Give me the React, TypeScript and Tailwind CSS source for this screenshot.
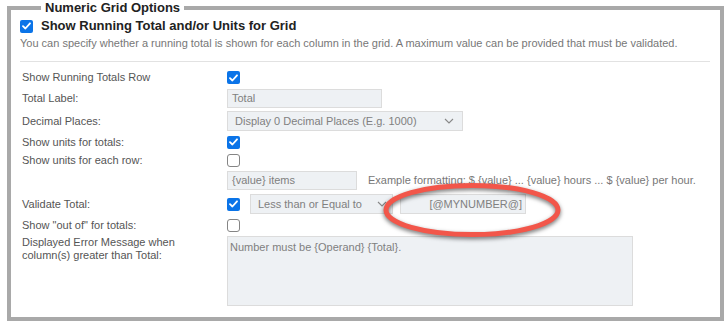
import React from "react";

const Check = ({ on }: { on?: boolean }) =>
  on ? (
    <span className="flex h-[13px] w-[13px] items-center justify-center rounded-[2px] bg-[#0b74e8]">
      <svg width="9" height="8" viewBox="0 0 9 8">
        <path d="M1 4.2 L3.4 6.5 L8 1.3" fill="none" stroke="#fff" strokeWidth="1.8" strokeLinecap="round" strokeLinejoin="round" />
      </svg>
    </span>
  ) : (
    <span className="block h-[13px] w-[13px] rounded-[3px] border border-[#858585] bg-white" />
  );

const Chevron = () => (
  <svg width="10" height="6" viewBox="0 0 10 6">
    <path d="M1 1 L5 5 L9 1" fill="none" stroke="#888" strokeWidth="1.1" />
  </svg>
);

const Row = ({ label, h, children }: { label: string; h: string; children?: React.ReactNode }) => (
  <div className={`flex items-center ${h}`}>
    <div className="w-[207px] shrink-0 pl-[2px] text-[11px] leading-[13px] text-[#555]">{label}</div>
    <div className="flex items-center">{children}</div>
  </div>
);

const field = "flex items-center border border-[#dcdcdc] bg-[#eef1f4] text-[11px] text-[#808080]";

export default function App() {
  return (
    <div className="h-[326px] w-[728px] bg-white font-['Liberation_Sans',Arial,sans-serif]">
      <fieldset className="relative ml-[7px] h-[321px] w-[717px] border-4 border-[#a9a9a9] pl-[9px] pr-[10px]">
        <legend className="ml-[21px] px-[4px] text-[13px] font-bold leading-[16px] text-[#222]">Numeric Grid Options</legend>

        <div className="mt-[2px] flex h-[16px] items-center gap-[8px]">
          <Check on />
          <span className="text-[13px] font-bold text-[#222]">Show Running Total and/or Units for Grid</span>
        </div>
        <div className="mt-[2px] text-[11px] leading-[14px] text-[#777]">
          You can specify whether a running total is shown for each column in the grid. A maximum value can be provided that must be validated.
        </div>
        <div className="mt-[11px] border-t border-[#e2e2e2]" />

        <div className="mt-[6px] flex flex-col">
          <Row label="Show Running Totals Row" h="h-[19px]">
            <Check on />
          </Row>
          <Row label="Total Label:" h="h-[22px]">
            <div className={`${field} h-[19px] w-[155px] px-[4px]`}>Total</div>
          </Row>
          <Row label="Decimal Places:" h="h-[24px]">
            <div className={`${field} h-[20px] w-[236px] justify-between pl-[7px] pr-[8px]`}>
              <span>Display 0 Decimal Places (E.g. 1000)</span>
              <Chevron />
            </div>
          </Row>
          <Row label="Show units for totals:" h="h-[18px]">
            <Check on />
          </Row>
          <Row label="Show units for each row:" h="h-[18px]">
            <Check />
          </Row>
          <Row label="" h="h-[23px]">
            <div className={`${field} h-[19px] w-[130px] px-[4px]`}>{"{value} items"}</div>
            <span className="ml-[11px] text-[11px] text-[#777]">
              {"Example formatting: $ {value} ... {value} hours ... $ {value} per hour."}
            </span>
          </Row>
          <Row label="Validate Total:" h="h-[24px]">
            <Check on />
            <div className={`${field} ml-[10px] h-[20px] w-[143px] justify-between pl-[7px] pr-[5px]`}>
              <span>Less than or Equal to</span>
              <Chevron />
            </div>
            <div className={`${field} ml-[7px] h-[20px] w-[126px] justify-end pr-[3px]`}>[@MYNUMBER@]</div>
          </Row>
          <Row label={'Show "out of" for totals:'} h="h-[18px]">
            <Check />
          </Row>
          <div className="flex pt-[2px]">
            <div className="w-[207px] shrink-0 pl-[2px] text-[11px] leading-[13px] text-[#555]">
              Displayed Error Message when
              <br />
              column(s) greater than Total:
            </div>
            <div className="h-[70px] w-[406px] border border-[#dcdcdc] bg-[#eef1f4] p-[2px] text-[11px] text-[#808080]">
              {"Number must be {Operand} {Total}."}
            </div>
          </div>
        </div>

        <svg
          className="pointer-events-none absolute left-[366px] top-[164px] drop-shadow-[0_2px_2px_rgba(0,0,0,0.55)]"
          width="190"
          height="64"
          viewBox="0 0 190 64"
        >
          <ellipse cx="95" cy="30" rx="86" ry="24.5" fill="none" stroke="#f2564a" strokeWidth="5" />
        </svg>
      </fieldset>
    </div>
  );
}
